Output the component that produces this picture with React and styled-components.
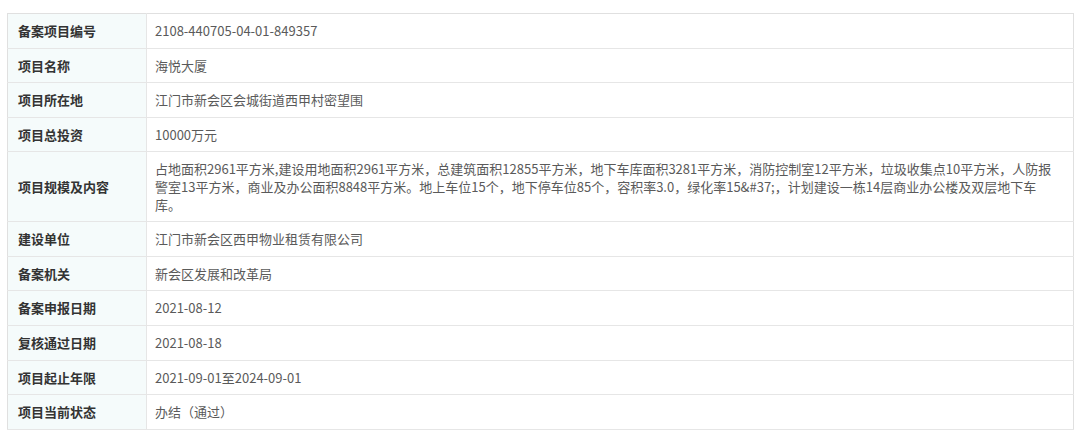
import React from 'react';
import styled, { createGlobalStyle } from 'styled-components';

const GlobalStyle = createGlobalStyle`
  body {
    margin: 0;
    background: #ffffff;
    font-family: "Noto Sans CJK SC", "Noto Sans", sans-serif;
  }
`

const Page = styled.div`
  padding: 13px 6px 0 7px;
`

const Table = styled.table`
  width: 100%;
  border-collapse: collapse;
  border: 1px solid #e0e0e0;
  font-size: 13px;
`

const Row = styled.tr`
  border-bottom: 1px solid #e6e6e6;
`

const Label = styled.th`
  width: 119px;
  padding: 8px 9px 8px 10px;
  background: #f5fbfb;
  border-right: 1px solid #e6e6e6;
  color: #333333;
  font-weight: bold;
  text-align: left;
  line-height: 17.6px;
  white-space: nowrap;
`

const Value = styled.td`
  padding: 8px 12px 8px 8px;
  color: #5a5a5a;
  line-height: 17.6px;
  text-align: left;
`

const rows = [
  ['备案项目编号', '2108-440705-04-01-849357'],
  ['项目名称', '海悦大厦'],
  ['项目所在地', '江门市新会区会城街道西甲村密望围'],
  ['项目总投资', '10000万元'],
  ['项目规模及内容', '占地面积2961平方米,建设用地面积2961平方米，总建筑面积12855平方米，地下车库面积3281平方米，消防控制室12平方米，垃圾收集点10平方米，人防报警室13平方米，商业及办公面积8848平方米。地上车位15个，地下停车位85个，容积率3.0，绿化率15&#37;，计划建设一栋14层商业办公楼及双层地下车库。'],
  ['建设单位', '江门市新会区西甲物业租赁有限公司'],
  ['备案机关', '新会区发展和改革局'],
  ['备案申报日期', '2021-08-12'],
  ['复核通过日期', '2021-08-18'],
  ['项目起止年限', '2021-09-01至2024-09-01'],
  ['项目当前状态', '办结（通过）'],
];

export default function App() {
  return (
    <Page>
      <GlobalStyle />
      <Table>
        <tbody>
          {rows.map(([label, value]) => (
            <Row key={label}>
              <Label>{label}</Label>
              <Value>{value}</Value>
            </Row>
          ))}
        </tbody>
      </Table>
    </Page>
  );
}
